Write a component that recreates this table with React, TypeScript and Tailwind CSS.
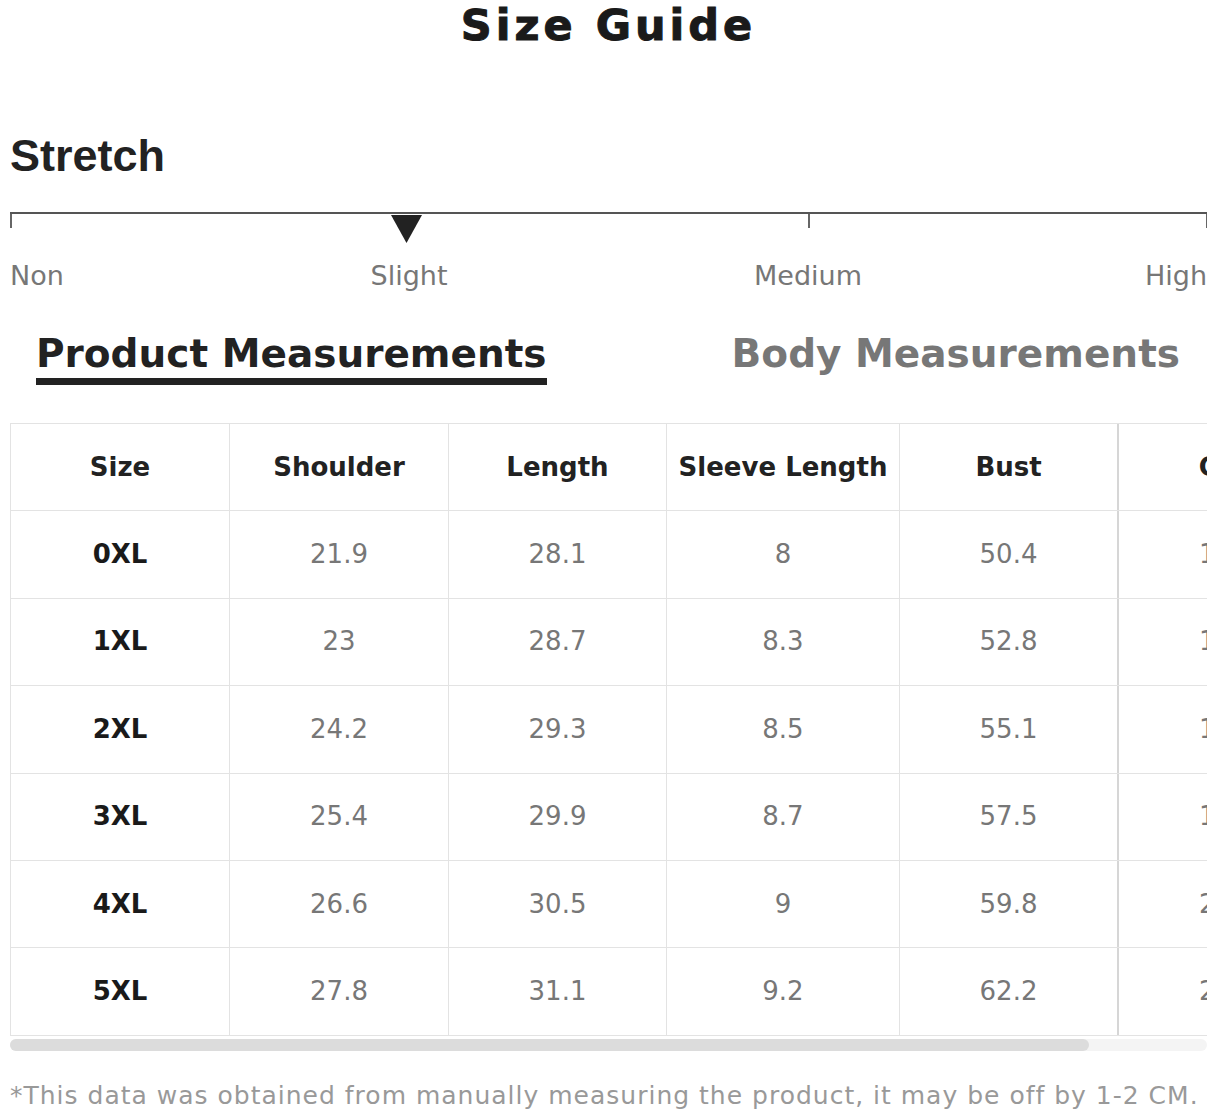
import React from "react";

interface SizeRow {
  size: string;
  shoulder: string;
  length: string;
  sleeve: string;
  bust: string;
  cuff: string;
}

const rows: SizeRow[] = [
  { size: "0XL", shoulder: "21.9", length: "28.1", sleeve: "8", bust: "50.4", cuff: "17.3" },
  { size: "1XL", shoulder: "23", length: "28.7", sleeve: "8.3", bust: "52.8", cuff: "18.1" },
  { size: "2XL", shoulder: "24.2", length: "29.3", sleeve: "8.5", bust: "55.1", cuff: "18.9" },
  { size: "3XL", shoulder: "25.4", length: "29.9", sleeve: "8.7", bust: "57.5", cuff: "19.7" },
  { size: "4XL", shoulder: "26.6", length: "30.5", sleeve: "9", bust: "59.8", cuff: "20.5" },
  { size: "5XL", shoulder: "27.8", length: "31.1", sleeve: "9.2", bust: "62.2", cuff: "21.3" },
];

const headers = ["Size", "Shoulder", "Length", "Sleeve Length", "Bust", "Cuff"];
// anchos de columna medidos
const widths = ["w-[219px]", "w-[219px]", "w-[218px]", "w-[233px]", "w-[219px]", "w-[219px]"];

function StretchScale() {
  return (
    <div className="mt-[34px]">
      <div className="relative h-[50px]">
        <div className="h-[2px] bg-[#555]" />
        {/* marcas */}
        <div className="absolute left-0 top-[2px] h-[14px] w-[1.5px] bg-[#666]" />
        <div className="absolute left-2/3 top-[2px] h-[14px] w-[1.5px] bg-[#666]" />
        <div className="absolute right-0 top-[2px] h-[14px] w-[1.5px] bg-[#666]" />
        <svg
          className="absolute left-[381px] top-[3px]"
          width="31"
          height="28"
          viewBox="0 0 31 28"
        >
          <polygon points="0,0 31,0 15.5,28" fill="#222" />
        </svg>
      </div>
      <div className="relative h-[27px] font-['DejaVu_Sans',sans-serif] text-[27px] leading-none text-[#777]">
        <span className="absolute left-0 top-0">Non</span>
        <span className="absolute left-1/3 top-0 -translate-x-1/2">Slight</span>
        <span className="absolute left-2/3 top-0 -translate-x-1/2">Medium</span>
        <span className="absolute right-0 top-0">High</span>
      </div>
    </div>
  );
}

function SizeTable() {
  return (
    <div className="mt-[38px]">
      <div className="overflow-hidden">
        <div className="w-[1327px] border-t border-l border-[#e3e3e3] font-['DejaVu_Sans',sans-serif]">
          <div className="flex h-[87.4px] border-b border-[#e3e3e3]">
            {headers.map((h, i) => (
              <div
                key={h}
                className={`${widths[i]} flex shrink-0 items-center justify-center ${i === 4 ? "border-r-2 border-[#d6d6d6]" : "border-r border-[#e3e3e3]"} text-[26px] font-bold text-[#222]`}
              >
                {h}
              </div>
            ))}
          </div>
          {rows.map((r) => {
            const cells = [r.size, r.shoulder, r.length, r.sleeve, r.bust, r.cuff];
            return (
              <div key={r.size} className="flex h-[87.4px] border-b border-[#e3e3e3]">
                {cells.map((c, i) => (
                  <div
                    key={i}
                    className={`${widths[i]} flex shrink-0 items-center justify-center ${i === 4 ? "border-r-2 border-[#d6d6d6]" : "border-r border-[#e3e3e3]"} text-[26px] ${i === 0 ? "font-bold text-[#1a1a1a]" : "text-[#777]"}`}
                  >
                    {c}
                  </div>
                ))}
              </div>
            );
          })}
        </div>
      </div>
      {/* barra de desplazamiento */}
      <div className="mt-[3px] h-[12px] rounded-full bg-[#f4f4f4]">
        <div className="h-full w-[1079px] rounded-full bg-[#dcdcdc]" />
      </div>
    </div>
  );
}

export default function App() {
  return (
    <div className="min-h-[1116px] w-full bg-white px-[10px] pt-[4px]">
      <h1 className="text-center font-['DejaVu_Sans',sans-serif] text-[43px] font-bold leading-none tracking-[4px] text-[#1a1a1a] [-webkit-text-stroke:1px_#1a1a1a]">
        Size Guide
      </h1>

      <h2 className="mt-[86px] font-['Liberation_Sans',Arial,sans-serif] text-[45px] font-bold leading-none text-[#222]">
        Stretch
      </h2>

      <StretchScale />

      <div className="mt-[45px] flex items-start justify-between pl-[26px] pr-[27px] font-['DejaVu_Sans',sans-serif] text-[39px] font-bold leading-none">
        <div className="border-b-[7px] border-[#222] pb-[5px] text-[#222]">Product Measurements</div>
        <div className="text-[#777]">Body Measurements</div>
      </div>

      <SizeTable />

      <p className="mt-[32px] font-['DejaVu_Sans',sans-serif] text-[25px] leading-none tracking-[1px] text-[#999]">
        *This data was obtained from manually measuring the product, it may be off by 1-2 CM.
      </p>
    </div>
  );
}
